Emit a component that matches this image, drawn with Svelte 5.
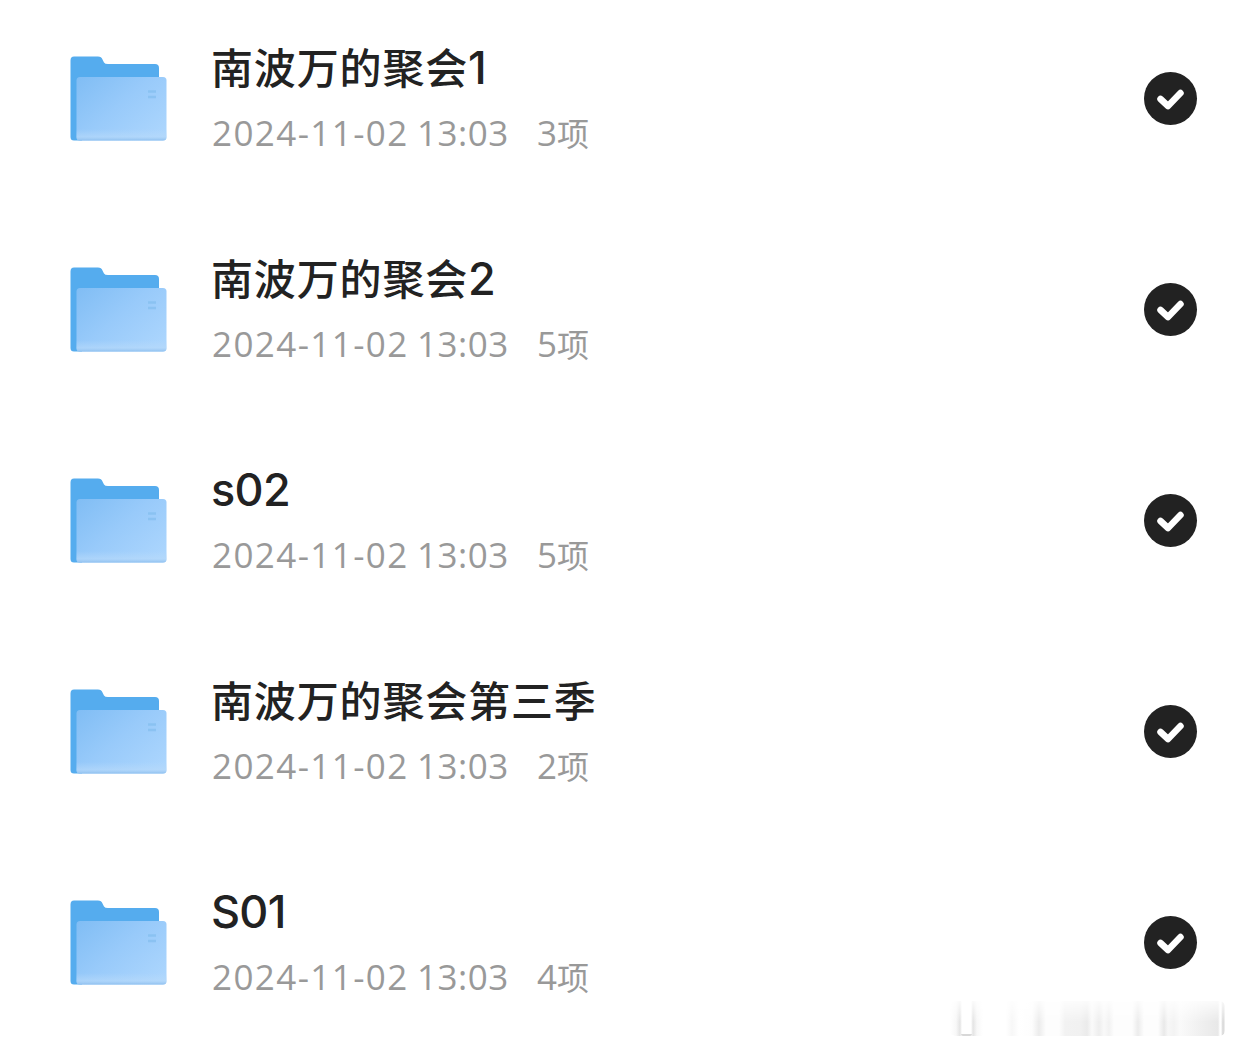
<script lang="ts">
  type Folder = { name: string; suffix: string; date: string; time: string; count: number };

  let folders: Folder[] = $state([
    { name: "南波万的聚会", suffix: "1", date: "2024-11-02", time: "13:03", count: 3 },
    { name: "南波万的聚会", suffix: "2", date: "2024-11-02", time: "13:03", count: 5 },
    { name: "", suffix: "s02", date: "2024-11-02", time: "13:03", count: 5 },
    { name: "南波万的聚会第三季", suffix: "", date: "2024-11-02", time: "13:03", count: 2 },
    { name: "", suffix: "S01", date: "2024-11-02", time: "13:03", count: 4 },
  ]);
</script>

<svg class="defs" width="0" height="0" aria-hidden="true">
  <linearGradient id="folder-front" x1="0" y1="0" x2="1" y2="0.8">
    <stop offset="0" stop-color="#80bdf4" />
    <stop offset="0.5" stop-color="#98cafa" />
    <stop offset="1" stop-color="#abd5fd" />
  </linearGradient>
  <linearGradient id="folder-shade" x1="0" y1="0" x2="0" y2="1">
    <stop offset="0.82" stop-color="#b8dafa" stop-opacity="0" />
    <stop offset="0.94" stop-color="#b8dafa" stop-opacity="0.6" />
    <stop offset="1" stop-color="#8fc0ef" />
  </linearGradient>
</svg>

<ul class="list">
  {#each folders as folder}
    <li class="row">
      <svg class="folder" viewBox="0 0 97 86">
        <path
          d="M4 .5H28Q31.500 .5 32.500 3.500L34 6.500Q35 8 38 8H85Q89 8 89 12V60H12V84.500H4Q.5 84.500 .5 81V4.500Q.5 .5 4 .5Z"
          fill="#55acee"
        />
        <rect x="6.500" y="21" width="90" height="63.500" rx="3.500" fill="url(#folder-front)" />
        <rect x="6.500" y="21" width="90" height="63.500" rx="3.500" fill="url(#folder-shade)" />
        <path d="M78 35.500H86M78 41H86" stroke="#86bff0" stroke-width="2.500" stroke-opacity="0.8" />
      </svg>
      <div class="info">
        <div class="name">{folder.name}<span class="latin">{folder.suffix}</span></div>
        <div class="meta">
          <span class="date">{folder.date}</span>
          <span class="time">{folder.time}</span>
          <span class="count">{folder.count}<span class="unit">项</span></span>
        </div>
      </div>
      <svg class="check" viewBox="0 0 54 54">
        <circle cx="26.500" cy="26.500" r="26.500" fill="#222" />
        <path
          d="M16.500 27L24 34L36.500 21"
          fill="none"
          stroke="#fff"
          stroke-width="6.500"
          stroke-linecap="round"
          stroke-linejoin="round"
        />
      </svg>
    </li>
  {/each}
</ul>

<div class="watermark"></div>

<style>
  :global(body) {
    margin: 0;
    background: #fff;
    overflow: hidden;
  }

  .defs {
    position: absolute;
  }

  .list {
    display: grid;
    gap: 14px;
    margin: 0;
    padding: 0 38px 0 70px;
    list-style: none;
  }

  .row {
    display: flex;
    align-items: center;
    height: 197px;
  }

  .folder {
    width: 97px;
    height: 86px;
    flex-shrink: 0;
  }

  .info {
    flex: 1;
    margin-left: 44px;
    padding-top: 2px;
    white-space: nowrap;
  }

  .name {
    height: 66px;
    line-height: 66px;
    color: #222;
    font-family: Inter, "Noto Sans CJK SC", sans-serif;
    font-size: 42px;
    font-weight: 500;
    letter-spacing: 0.85px;
  }

  .latin {
    font-size: 45px;
    letter-spacing: -0.7px;
  }

  .meta {
    display: flex;
    height: 64px;
    padding-left: 1px;
    line-height: 64px;
    color: #999;
    font-family: "Open Sans", "Noto Sans CJK SC", sans-serif;
    font-size: 35px;
  }

  .date {
    width: 205px;
    letter-spacing: 1.4px;
  }

  .time {
    width: 120px;
    letter-spacing: 0.5px;
  }

  .unit {
    font-size: 32px;
  }

  .check {
    width: 54px;
    height: 54px;
    flex-shrink: 0;
  }

  .watermark {
    position: absolute;
    left: 950px;
    top: 1001px;
    width: 275px;
    height: 35px;
    border-radius: 5px;
    background: linear-gradient(
      90deg,
      #fff 0,
      #f8f8f8 6px,
      #e4e4e4 10px,
      #fff 12px,
      #fff 21px,
      #e4e4e4 23px,
      #f8f8f8 27px,
      #fff 33px,
      #fff 56px,
      #f7f7f7 62px,
      #fff 69px,
      #fdfdfd 82px,
      #ececec 89px,
      #fdfdfd 96px,
      #fdfdfd 109px,
      #f2f2f2 115px,
      #f1f1f1 130px,
      #ebebeb 137px,
      #fafafa 142px,
      #eee 149px,
      #f9f9f9 154px,
      #f2f2f2 159px,
      #fdfdfd 164px,
      #fdfdfd 182px,
      #ececec 188px,
      #fdfdfd 194px,
      #fdfdfd 208px,
      #e9e9e9 214px,
      #f7f7f7 218px,
      #f3f3f3 224px,
      #fafafa 230px,
      #f0f0f0 250px,
      #e8e8e8 268px,
      #fff 270px,
      #fff 271px,
      #d4d4d4 273px,
      #f4f4f4 275px
    );
    mask-image: linear-gradient(rgba(0, 0, 0, 0.2), #000 60%);
  }

  .watermark::after {
    content: "";
    position: absolute;
    left: 11px;
    bottom: 0;
    width: 11px;
    height: 2px;
    border-radius: 0 0 4px 4px;
    background: #d8d8d8;
  }
</style>
